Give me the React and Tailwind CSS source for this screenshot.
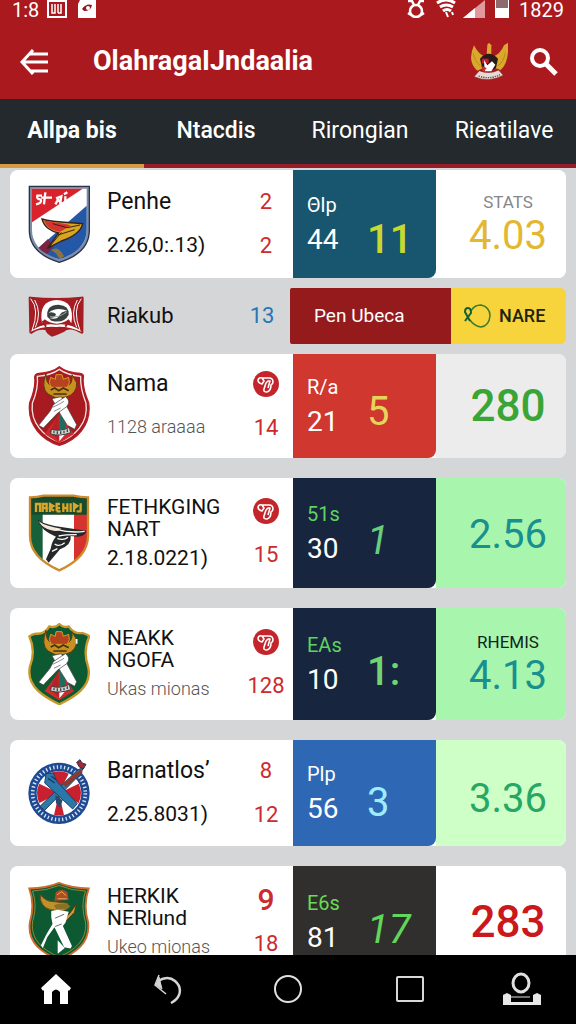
import React, { useState } from 'react'

const StripedShield = () => (
    <svg viewBox="0 0 186 234" className="w-[62px]" aria-hidden="true">
        <path d="M4 4H184V136C184 186 146 216 94 232C42 216 4 186 4 136Z" fill="#7e8da6" stroke="#28344d" strokeWidth="4" />
        <path d="M12 11H176V134C176 180 142 208 94 223C46 208 12 180 12 134Z" fill="#fff" />
        <path d="M12 11H164L12 112Z" fill="#d9232c" />
        <path d="M176 62V134C176 180 142 208 94 223C68 215 46 204 32 188Z" fill="#2457a6" />
        <path d="M32 188L60 162L76 184L58 208Q42 200 32 188Z" fill="#7b2340" />
        <path d="M42 32H28Q24 42 38 44Q44 54 24 58M52 22L48 58M40 38H72M84 40L100 34L96 58M82 58L90 44L104 58M108 28L118 22M112 34V52" stroke="#fff" strokeWidth="7" fill="none" />
        <path d="M76 192Q94 184 108 214L94 222Q84 200 68 196Z" fill="#8b7440" />
        <path d="M42 102C76 112 120 112 164 116C158 144 130 158 100 168L58 190L92 144C70 140 48 126 42 102Z" fill="#d9a520" stroke="#33231c" strokeWidth="4" />
        <path d="M48 106C72 114 104 112 128 122L96 140C74 138 54 126 48 106Z" fill="#d8332f" />
        <path d="M74 116L118 128L156 120M90 150L140 134M100 142L62 188" stroke="#33231c" strokeWidth="3" fill="none" />
    </svg>
)

const RedBanner = () => (
    <svg viewBox="0 0 168 123" className="w-14" aria-hidden="true">
        <path d="M2 4Q4 0 8 2Q84 10 160 2Q166 0 167 5L166 110Q164 115 158 112Q134 96 116 102Q104 112 72 122Q56 114 52 102Q30 98 10 114L4 110Z" fill="#a51c22" />
        <path d="M8 8Q36 40 12 104M20 12Q42 50 22 94M160 8Q132 40 156 104M148 12Q126 50 146 94" stroke="#fff" strokeWidth="3" fill="none" />
        <path d="M42 82Q30 14 86 12Q142 14 130 82L122 70Q86 96 50 70Z" fill="#fff" />
        <path d="M58 62Q54 26 92 26Q124 28 122 56Q108 84 70 74Z" fill="#39413f" />
        <path d="M62 50Q84 32 118 44Q98 46 92 62Q84 72 64 66Q82 66 84 54Q74 46 62 50Z" fill="#fff" />
        <path d="M66 62Q92 66 116 48" stroke="#9da5a2" strokeWidth="3" fill="none" />
        <path d="M6 108Q40 80 84 86Q130 80 162 108Q120 90 84 93Q42 90 6 108Z" fill="#fff" />
        <path d="M54 92L44 74M112 92L124 74" stroke="#a51c22" strokeWidth="6" />
    </svg>
)

// Crossed bats under a golden crown, shared by the red and green crests
const CrossedBats = () => (
    <g>
        <path d="M54 22Q38 66 60 84L84 96L112 94Q148 84 146 50L132 26Q136 60 108 62H76Q52 56 54 22Z" fill="#c8901f" stroke="#5b3b12" strokeWidth="3" />
        <path d="M64 50L68 34L82 40L84 26H102L106 40L122 34L124 50L118 64H70Z" fill="#b5431f" stroke="#d89b25" strokeWidth="3" />
        <path d="M68 72L80 66L92 74L106 66L122 74M76 84H116" stroke="#46320f" strokeWidth="5" fill="none" />
        <path d="M94 144L50 204L94 232L138 204Z" fill="#d12a2e" />
        <path d="M94 146V200H118L106 150Z" fill="#1f6c5e" />
        <path d="M86 154L66 196L92 224V150Z" fill="#b32226" />
        <path d="M94 198L114 202L94 226Z" fill="#fff" />
        <path d="M72 98L100 92L122 132L146 176L140 190L118 178L98 146Z" fill="#fff" stroke="#3e3e3e" strokeWidth="2" />
        <path d="M76 116L112 92Q130 104 116 122L88 142L46 186L32 178L66 136Z" fill="#fff" stroke="#3e3e3e" strokeWidth="2" />
        <path d="M74 124Q92 116 108 106M78 136L98 126" stroke="#555" strokeWidth="2" fill="none" />
        <path d="M70 190Q98 198 124 184L128 200Q96 212 68 204Z" fill="#cfd2d2" stroke="#3e3e3e" strokeWidth="3" />
        <path d="M78 202V194M88 204V196M98 204V196M108 202V194M118 198V190" stroke="#444" strokeWidth="4" />
    </g>
)

const RedCrest = () => (
    <svg viewBox="0 0 186 240" className="w-[62px]" aria-hidden="true">
        <path d="M94 2Q116 20 156 22Q168 24 166 34Q162 64 182 110C192 180 142 224 94 238C46 224 -4 180 5 110Q24 64 20 34Q20 24 32 22Q72 20 94 2Z" fill="#a61a20" stroke="#b42026" strokeWidth="4" />
        <path d="M94 10Q118 27 158 31Q156 66 174 112C182 172 138 214 94 228C50 214 6 172 13 112Q32 66 28 31Q70 27 94 10Z" fill="none" stroke="#f4e4e2" strokeWidth="4" />
        <CrossedBats />
    </svg>
)

const GreenCrest = () => (
    <svg viewBox="0 0 186 248" className="w-[62px]" aria-hidden="true">
        <path d="M94 3Q106 16 122 10Q138 34 164 30Q178 34 184 40Q164 84 180 130C196 192 134 224 94 244C54 224 -8 192 6 130Q24 84 4 40Q12 34 24 32Q50 34 64 10Q82 16 94 3Z" fill="#0d5932" stroke="#c99829" strokeWidth="7" />
        <CrossedBats />
        <path d="M146 48V62" stroke="#fff" strokeWidth="5" />
    </svg>
)

const TricolorShield = () => (
    <svg viewBox="0 0 186 234" className="w-[62px]" aria-hidden="true">
        <clipPath id="tricolor">
            <path d="M6 10Q28 10 46 5H136Q158 10 180 10V126C180 176 140 208 94 229C46 208 6 176 6 126Z" />
        </clipPath>
        <g clipPath="url(#tricolor)">
            <path d="M0 0H186V234H0Z" fill="#fff" />
            <path d="M0 0H44V234H0Z" fill="#17603a" />
            <path d="M138 0H186V234H138Z" fill="#d6332f" />
            <path d="M0 0H186V62H0Z" fill="#174b2c" />
        </g>
        <path d="M6 10Q28 10 46 5H136Q158 10 180 10V126C180 176 140 208 94 229C46 208 6 176 6 126Z" fill="none" stroke="#d08a2c" strokeWidth="7" />
        <path d="M24 54V30H36V54M44 54V30H56V54M44 42H56M66 54V30L76 36L66 42L78 50M86 52V30H96M86 42H96M86 52H98M106 28V54M118 28V54M106 42H118M128 28V54M138 54V30L148 36L138 44M158 28V52M146 52H160" stroke="#d8a62b" strokeWidth="7" fill="none" />
        <path d="M28 76Q42 88 80 96L174 110Q176 124 150 128L128 126Q132 152 96 166L62 206L54 196L68 164Q72 140 84 128Q40 112 28 76Z" fill="#26282a" />
        <path d="M32 82Q52 97 100 104Q90 115 70 109Q44 104 32 82Z" fill="#f3e7d8" />
        <path d="M84 106Q130 118 170 112M92 126Q112 122 146 122M88 134Q108 140 120 130M80 150Q94 160 110 146M72 172L88 164" stroke="#fff" strokeWidth="4" fill="none" />
    </svg>
)

const RoundCrest = () => (
    <svg viewBox="0 0 186 202" className="w-[62px]" aria-hidden="true">
        <circle cx="93" cy="103" r="92" fill="#1d4a93" />
        <circle cx="93" cy="103" r="79" fill="none" stroke="#d8e2f2" strokeWidth="11" strokeDasharray="4 7" />
        <circle cx="93" cy="103" r="67" fill="#fff" />
        <path d="M93 103L64 44A66 66 0 0 1 122 44ZM93 103L34 132A66 66 0 0 1 34 74ZM93 103L152 74A66 66 0 0 1 152 132ZM93 103L108 168A66 66 0 0 1 78 168Z" fill="#c9202f" />
        <path d="M36 142L150 32L166 26L158 44L50 154Z" fill="#2d79a8" stroke="#213f63" strokeWidth="3" />
        <path d="M104 74L158 30L164 40L114 84Z" fill="#8b3a2d" />
        <path d="M54 44L76 42L86 66L148 134L134 150L72 92L50 72Z" fill="#2a78ab" stroke="#213f63" strokeWidth="3" />
        <path d="M82 108L104 124L96 146L84 132Z" fill="#274a70" />
        <path d="M146 10L156 2L162 12L174 16L166 30L154 24Z" fill="#a42733" stroke="#233555" strokeWidth="3" />
        <path d="M60 58L80 72M70 52L84 62" stroke="#173c63" strokeWidth="4" />
    </svg>
)

const BatsmanCrest = () => (
    <svg viewBox="0 0 192 246" className="w-[62px]" aria-hidden="true">
        <path d="M96 3Q136 20 188 20Q170 70 186 124C194 190 146 220 96 242C46 220 -4 190 6 124Q22 70 4 20Q56 20 96 3Z" fill="#0d5932" stroke="#cf6b2e" strokeWidth="6" />
        <path d="M96 11Q136 27 178 28Q162 72 178 124C184 182 142 212 96 232C50 212 8 182 14 124Q30 72 14 28Q56 27 96 11Z" fill="none" stroke="#d7a03a" strokeWidth="2" />
        <path d="M38 40Q36 76 70 86L108 90Q128 84 124 66L74 60Q60 62 38 40Z" fill="#c0902c" stroke="#6c4a17" strokeWidth="3" />
        <path d="M82 58L86 32Q104 16 122 32L126 56Z" fill="#b04b2a" />
        <path d="M90 40L104 30L118 42M92 52H120" stroke="#e3b34b" strokeWidth="3" fill="none" />
        <path d="M80 72Q106 60 132 74L122 84H88Z" fill="#897221" />
        <path d="M150 68L144 94L104 136L96 132L130 96Z" fill="#c89a34" stroke="#503816" strokeWidth="3" />
        <path d="M72 90L92 86L126 92L116 126L108 136L136 198L132 206L112 202L82 140L60 170L46 204L40 196L58 160L76 130L72 110Z" fill="#fff" />
        <path d="M92 180L114 204L92 222Z" fill="#fff" />
        <path d="M84 112L112 100M84 138L104 130" stroke="#666" strokeWidth="3" />
    </svg>
)

const Garuda = () => (
    <svg viewBox="0 0 114 120" className="w-[38px]" aria-hidden="true">
        <path d="M12 10Q-10 58 22 86L40 78L48 46Q24 36 12 10Z" fill="#d9a82c" />
        <path d="M102 10L114 2Q118 60 92 84L74 78L66 46Q92 36 102 10Z" fill="#d9a82c" />
        <path d="M10 34Q14 58 32 72M106 32Q102 58 84 72" stroke="#a87a1c" strokeWidth="2" fill="none" />
        <path d="M50 40L52 8L57 2L64 10V40Z" fill="#e0a92e" />
        <path d="M30 50Q56 20 84 50L78 78Q56 96 36 76Z" fill="#2b1a1a" />
        <path d="M36 50H56V64H36Z" fill="#c5202a" />
        <path d="M42 54L52 70L66 58L76 68L64 88H44Z" fill="#fff" />
        <path d="M34 72L50 78L40 92Z" fill="#d02a2e" />
        <path d="M28 86Q58 98 86 84L100 100Q56 124 12 104Z" fill="#e7d9d4" stroke="#7c2b26" strokeWidth="2" />
        <path d="M26 102Q58 114 90 98" stroke="#6c4e4a" strokeWidth="4" strokeDasharray="4 3" fill="none" />
    </svg>
)

const Badge = () => (
    <span className="flex h-[26px] w-[26px] items-center justify-center rounded-full bg-[#c4252b]">
        <svg viewBox="0 0 26 26" className="h-[26px] w-[26px]" fill="none" stroke="#fff" strokeWidth="1.6" strokeLinejoin="round" aria-hidden="true">
            <path d="M5 9Q6 6 9 7L11 10L9 13Q5 12 5 9ZM9 7H16Q20 7 20 11Q20 13 18 14Q18 20 14 21Q10 21 11 18L13 12" />
            <path d="M13 12L15 10H17L15 17" />
        </svg>
    </span>
)

const teams = [
    {
        id: 1, crest: StripedShield, name: ['Penhe'], sub: '2.26,0:.13)', top: '2', bottom: '2',
        label: 'Θlp', played: '44', score: '11', caption: 'STATS', rate: '4.03',
        row: 'min-h-[108px]', panel: 'bg-[#17566e]', labelColor: 'text-white', scoreStyle: 'text-[#c6d92f] pt-8 font-medium',
        rateBox: 'bg-white', rateStyle: 'text-[#e3b732] text-[40px]', captionColor: 'text-[#85878a]',
    },
    {
        id: 3, crest: RedCrest, name: ['Nama'], sub: '1128 araaaa', muted: true, badge: true, bottom: '14',
        label: 'R/a', played: '21', score: '5', rate: '280',
        row: 'min-h-[104px]', panel: 'bg-[#cf372f]', labelColor: 'text-white', scoreStyle: 'text-[#e6d35c] pt-3',
        rateBox: 'bg-[#ececed]', rateStyle: 'text-[#3aa537] text-[44px] font-medium',
    },
    {
        id: 4, crest: TricolorShield, name: ['FETHKGING', 'NART'], sub: '2.18.0221)', badge: true, bottom: '15',
        label: '51s', played: '30', score: '1', rate: '2.56',
        row: 'min-h-[110px]', panel: 'bg-[#17263e]', labelColor: 'text-[#5fd35f]', scoreStyle: 'text-[#67cf7c] pt-4 italic',
        rateBox: 'bg-[#a8f5ad]', rateStyle: 'text-[#17908f] text-[40px] pt-1',
    },
    {
        id: 5, crest: GreenCrest, name: ['NEAKK', 'NGOFA'], sub: 'Ukas mionas', muted: true, badge: true, bottom: '128',
        label: 'EAs', played: '10', score: '1:', caption: 'RHEMIS', rate: '4.13',
        row: 'min-h-[112px]', panel: 'bg-[#17263e]', labelColor: 'text-[#5fd35f]', scoreStyle: 'text-[#70d470] pt-4 font-medium',
        rateBox: 'bg-[#a8f5ad]', rateStyle: 'text-[#17908f] text-[40px]', captionColor: 'text-[#10251b]',
    },
    {
        id: 6, crest: RoundCrest, name: ['Barnatlos’'], sub: '2.25.8031)', top: '8', bottom: '12',
        label: 'Plp', played: '56', score: '3', rate: '3.36',
        row: 'min-h-[106px]', panel: 'bg-[#2e68b5]', labelColor: 'text-white', scoreStyle: 'text-[#a0ecff] pt-5',
        rateBox: 'bg-[#cdffc6]', rateStyle: 'text-[#27a765] text-[40px] pt-3',
    },
    {
        id: 7, crest: BatsmanCrest, name: ['HERKIK', 'NERlund'], sub: 'Ukeo mionas', muted: true, top: '9', bottom: '18', strong: true,
        label: 'E6s', played: '81', score: '17', rate: '283',
        row: 'min-h-[112px]', panel: 'bg-[#302f2d]', labelColor: 'text-[#68dc55]', scoreStyle: 'text-[#62d65b] pt-4 italic',
        rateBox: 'bg-white', rateStyle: 'text-[#c9191c] text-[44px] font-medium',
    },
]

const TeamRow = ({ team }) => {
    const Crest = team.crest
    const twoLines = team.name.length > 1

    return (
        <li className={`grid grid-cols-[283fr_143fr_130fr] overflow-hidden rounded-lg bg-white ${team.row}`}>
            <div className="flex min-w-0 items-center pl-[18px]">
                <div className="w-[62px] shrink-0">
                    <Crest />
                </div>
                <div className={`flex min-w-0 flex-1 flex-col pl-[17px] whitespace-nowrap ${twoLines ? 'gap-1.5' : 'gap-5'}`}>
                    <h2 className={`leading-[22px] text-[#111] ${twoLines ? 'text-[21px]' : 'text-[23px]'}`}>
                        {team.name.map((line) => (
                            <span key={line} className="block">{line}</span>
                        ))}
                    </h2>
                    <p className={team.muted ? 'text-lg leading-6 font-light text-[#555]' : 'text-[21px] leading-6 text-[#111]'}>
                        {team.sub}
                    </p>
                </div>
                <div className="mr-[7px] flex w-10 shrink-0 flex-col items-center gap-[18px] text-[22px] leading-[26px] text-[#cb2a2e]">
                    {team.badge ? <Badge /> : <span className={team.strong ? 'text-3xl leading-[26px] font-medium' : ''}>{team.top}</span>}
                    <span>{team.bottom}</span>
                </div>
            </div>
            <div className={`flex items-center rounded-br-lg pl-3.5 ${team.panel}`}>
                <div className="flex w-[60px] flex-col gap-[7px]">
                    <span className={`text-xl leading-6 ${team.labelColor}`}>{team.label}</span>
                    <span className="text-[28px] leading-8 text-white">{team.played}</span>
                </div>
                <span className={`text-[40px] leading-none ${team.scoreStyle}`}>{team.score}</span>
            </div>
            <div className={`flex flex-col items-center justify-center pl-3.5 ${team.rateBox}`}>
                {team.caption && <span className={`text-[17px] leading-6 ${team.captionColor}`}>{team.caption}</span>}
                <span className={`leading-[44px] ${team.rateStyle}`}>{team.rate}</span>
            </div>
        </li>
    )
}

const LiveRow = () => (
    <li className="grid min-h-14 grid-cols-[280fr_161fr_115fr]">
        <div className="flex items-center pl-[18px]">
            <div className="w-[62px] shrink-0">
                <RedBanner />
            </div>
            <h2 className="flex-1 pl-[17px] text-[22px] leading-6 text-[#111]">Riakub</h2>
            <span className="mr-2 w-10 text-center text-[22px] leading-6 text-[#2577b5]">13</span>
        </div>
        <div className="flex items-center rounded-l-xs bg-[#951a1c] pl-6 text-[19px] text-white">Pen Ubeca</div>
        <div className="flex items-center gap-2 rounded-r-md bg-[#f7d33c] pl-3 text-lg font-medium text-[#1d2410]">
            <svg viewBox="0 0 28 26" className="w-7" fill="none" aria-hidden="true">
                <path d="M8 8Q11 2 18 2Q27 4 27 13Q26 23 18 24Q11 23 7 17" stroke="#3d7a2a" strokeWidth="1.5" />
                <path d="M2 18L8 10Q8 5 5 5Q2 5 2 9L7 18" stroke="#12602f" strokeWidth="2" />
            </svg>
            NARE
        </div>
    </li>
)

const StatusBar = () => (
    <div className="flex h-6 items-start justify-between px-3 text-xl leading-5 text-white">
        <div className="flex items-start gap-2">
            <span>1:8</span>
            <svg viewBox="0 0 20 18" className="h-[18px] w-5" fill="none" stroke="#fff" aria-hidden="true">
                <path d="M1 1H19V17H1Z" strokeWidth="2" />
                <path d="M5 4V13H8V4M11 4V13M14 4V13H11" strokeWidth="1.5" />
            </svg>
            <svg viewBox="0 0 20 18" className="ml-0.5 h-[18px] w-5" aria-hidden="true">
                <path d="M3 0H19V18H1V4Z" fill="#fff" />
                <path d="M5 9Q9 3 15 5Q14 11 7 11Z" fill="#8c1a20" />
                <circle cx="11" cy="8" r="2" fill="#fff" />
            </svg>
        </div>
        <div className="flex items-start gap-2.5">
            <svg viewBox="0 0 18 18" className="h-[18px] w-[18px]" fill="none" stroke="#fff" strokeWidth="2.5" aria-hidden="true">
                <path d="M1 1H5L7 5M17 1H13L11 5M1 13L4 15M17 13L14 15" />
                <circle cx="9" cy="11" r="6" />
            </svg>
            <svg viewBox="0 0 22 18" className="h-[18px] w-[22px]" fill="none" stroke="#fff" aria-hidden="true">
                <path d="M2 3Q11 -3 20 3M5 7Q11 3 18 7M8 11Q12 8 16 11" strokeWidth="3" />
                <path d="M11 12L13 17M17 12L18 15" strokeWidth="2" />
            </svg>
            <svg viewBox="0 0 22 18" className="-ml-1 h-[18px] w-[22px]" aria-hidden="true">
                <path d="M0 18L22 0V18Z" fill="#e09a9c" />
                <path d="M0 18L12 8V18Z" fill="#fff" />
            </svg>
            <svg viewBox="0 0 14 18" className="h-[18px] w-3.5" aria-hidden="true">
                <path d="M0 0H14V18H0Z" fill="#fff" />
                <path d="M1 0H13V8H1Z" fill="#8e6a6e" />
            </svg>
            <span>1829</span>
        </div>
    </div>
)

const tabs = ['Allpa bis', 'Ntacdis', 'Rirongian', 'Rieatilave']

const App = () => {
    const [activeTab, setActiveTab] = useState(tabs[0])

    return (
        <div className="flex h-screen flex-col overflow-hidden bg-[#d5d6d8] font-['Roboto',sans-serif]">
            <header className="shrink-0 bg-[#aa191d]">
                <StatusBar />
                <div className="flex h-[75px] items-center pr-[18px] pl-5">
                    <button type="button" aria-label="Back">
                        <svg viewBox="0 0 28 26" className="w-7" fill="none" stroke="#fff" strokeWidth="3" aria-hidden="true">
                            <path d="M13 1L2 13L13 25M10 5H28M3 13H28M10 22H28" />
                        </svg>
                    </button>
                    <h1 className="flex-1 pl-[45px] text-[27px] font-bold text-white">OlahragaIJndaalia</h1>
                    <Garuda />
                    <button type="button" aria-label="Search" className="ml-[22px]">
                        <svg viewBox="0 0 28 28" className="w-7" fill="none" stroke="#fff" aria-hidden="true">
                            <circle cx="10" cy="10" r="8" strokeWidth="4" />
                            <path d="M16 16L26 26" strokeWidth="5" />
                        </svg>
                    </button>
                </div>
            </header>

            <nav className="grid shrink-0 grid-cols-4 bg-[#23292c]">
                {tabs.map((tab) => (
                    <button
                        key={tab}
                        type="button"
                        onClick={() => setActiveTab(tab)}
                        className={`h-[69px] border-b-4 text-[23px] text-white ${
                            activeTab === tab ? 'border-[#d79a43] font-bold' : 'border-[#971e28]'
                        } ${tab === 'Ntacdis' ? 'font-medium' : ''}`}
                    >
                        {tab}
                    </button>
                ))}
            </nav>

            <main className="min-h-0 flex-1 overflow-hidden px-2.5 pt-0.5">
                <ul className="flex flex-col gap-2.5">
                    <TeamRow team={teams[0]} />
                    <LiveRow />
                    <li>
                        <ul className="flex flex-col gap-5">
                            {teams.slice(1).map((team) => (
                                <TeamRow key={team.id} team={team} />
                            ))}
                        </ul>
                    </li>
                </ul>
            </main>

            <footer className="grid h-[69px] shrink-0 grid-cols-[28fr_28fr_32fr_29fr_27fr] place-items-center bg-black pb-0.5">
                <button type="button" aria-label="Home">
                    <svg viewBox="0 0 30 30" className="w-[30px]" fill="#fff" aria-hidden="true">
                        <path d="M15 0L30 14L28 17L27 16V30H19V18Q15 13 11 18V30H3V16L2 17L0 14Z" />
                    </svg>
                </button>
                <button type="button" aria-label="Undo">
                    <svg viewBox="0 0 28 30" className="w-7" fill="none" stroke="#d5d5d5" aria-hidden="true">
                        <path d="M4 7Q14 1 21 7Q28 13 25 21Q23 26 17 29" strokeWidth="2.5" />
                        <path d="M5 1L1 11L12 20" strokeWidth="1.5" />
                        <path d="M5 3L2 11L8 15Z" fill="#d5d5d5" />
                    </svg>
                </button>
                <button type="button" aria-label="Circle">
                    <svg viewBox="0 0 28 28" className="w-7" fill="none" stroke="#e0e0e0" strokeWidth="2" aria-hidden="true">
                        <circle cx="14" cy="14" r="13" />
                    </svg>
                </button>
                <button type="button" aria-label="Recent apps">
                    <svg viewBox="0 0 28 26" className="w-7" fill="none" stroke="#d8d8d8" strokeWidth="2" aria-hidden="true">
                        <rect x="1" y="1" width="26" height="24" rx="1" />
                    </svg>
                </button>
                <button type="button" aria-label="Profile">
                    <svg viewBox="0 0 40 34" className="w-10" fill="none" stroke="#e0e0e0" aria-hidden="true">
                        <ellipse cx="19" cy="11" rx="8" ry="9" strokeWidth="3" />
                        <path d="M1 23L5 21L9 23V30H31V23L35 21L39 23V33H1Z" fill="#e8e8e8" stroke="none" />
                        <path d="M9 25H28" strokeWidth="1" />
                    </svg>
                </button>
            </footer>
        </div>
    )
}

export default App
